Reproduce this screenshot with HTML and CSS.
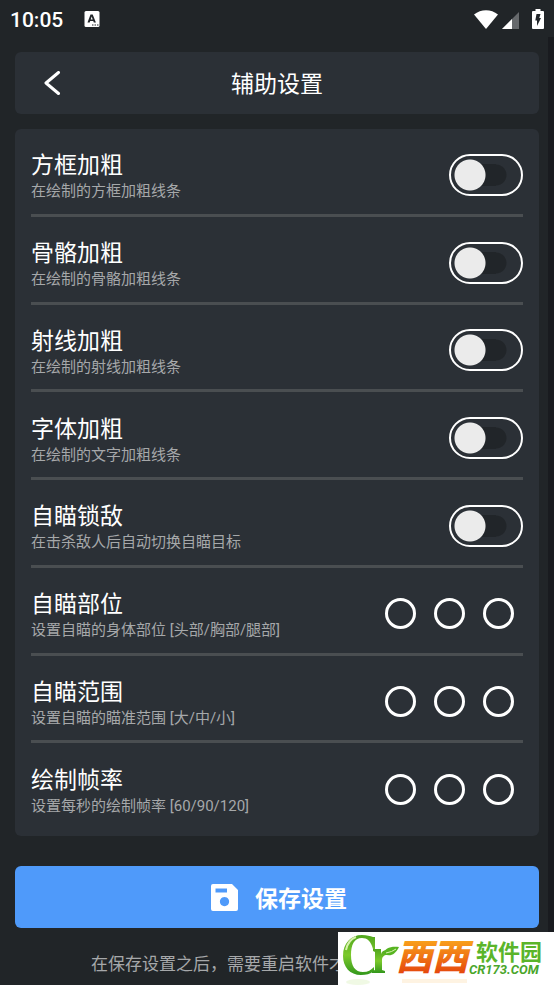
FILE: index.html
```html
<!DOCTYPE html>
<html lang="zh-CN">
<head>
<meta charset="utf-8">
<meta name="viewport" content="width=device-width, initial-scale=1">
<title>辅助设置</title>
<link rel="stylesheet" href="styles.css">
</head>
<body>
<div class="screen">
  <div class="status">
    <time class="clock">10:05</time>
    <svg class="ime" width="16" height="16" viewBox="0 0 16 16" aria-hidden="true"><rect x="0.5" y="0" width="15" height="16" rx="1.5" fill="#fff"/><path d="M3.500 11.500 6.500 3.500h2.200l3.200 8H9.800L9.300 10H6.200l-.5 1.500zM6.700 8.500h2L7.700 5.600z" fill="#212529" fill-rule="evenodd"/><path d="M8 14h1.500M10.500 14H12M13 14h1.500" stroke="#212529"/></svg>
    <div class="signals">
      <svg width="24" height="19" viewBox="0 0 24 19" aria-hidden="true"><path d="M0 4.500C7-1.300 17-1.300 24 4.500L12 19z" fill="#fff"/></svg>
      <svg class="cell" width="17" height="17" viewBox="0 0 17 17" aria-hidden="true"><path d="M17 0v17H0z" fill="#66696c"/><path d="M10 7v10H0z" fill="#fff"/></svg>
      <svg class="battery" width="12" height="20" viewBox="0 0 12 20" aria-hidden="true"><path d="M3.500 0h5v2H11q1 0 1 1v16q0 1-1 1H1q-1 0-1-1V3q0-1 1-1h2.500z" fill="#fff"/><path d="M4.500 5h4L7.300 9H9l-4 8v-5.500H3.300z" fill="#212529"/></svg>
    </div>
  </div>
  <header class="bar">
    <button class="back" type="button" aria-label="返回"><svg width="18" height="24" viewBox="0 0 18 24" aria-hidden="true"><path d="M15.500 1.500 3 12l12.500 10.500" fill="none" stroke="#fff" stroke-width="3" stroke-linecap="round" stroke-linejoin="round"/></svg></button>
    <h1 class="heading">辅助设置</h1>
  </header>
  <main class="card">
    <label class="row"><span class="text"><span class="title">方框加粗</span><span class="note">在绘制的方框加粗线条</span></span><input class="switch" type="checkbox"></label>
    <label class="row"><span class="text"><span class="title">骨骼加粗</span><span class="note">在绘制的骨骼加粗线条</span></span><input class="switch" type="checkbox"></label>
    <label class="row"><span class="text"><span class="title">射线加粗</span><span class="note">在绘制的射线加粗线条</span></span><input class="switch" type="checkbox"></label>
    <label class="row"><span class="text"><span class="title">字体加粗</span><span class="note">在绘制的文字加粗线条</span></span><input class="switch" type="checkbox"></label>
    <label class="row"><span class="text"><span class="title">自瞄锁敌</span><span class="note">在击杀敌人后自动切换自瞄目标</span></span><input class="switch" type="checkbox"></label>
    <div class="row" role="radiogroup" aria-labelledby="part"><span class="text"><span class="title" id="part">自瞄部位</span><span class="note">设置自瞄的身体部位 [头部/胸部/腿部]</span></span><span class="choices"><input type="radio" name="part" aria-label="头部"><input type="radio" name="part" aria-label="胸部"><input type="radio" name="part" aria-label="腿部"></span></div>
    <div class="row" role="radiogroup" aria-labelledby="range"><span class="text"><span class="title" id="range">自瞄范围</span><span class="note">设置自瞄的瞄准范围 [大/中/小]</span></span><span class="choices"><input type="radio" name="range" aria-label="大"><input type="radio" name="range" aria-label="中"><input type="radio" name="range" aria-label="小"></span></div>
    <div class="row" role="radiogroup" aria-labelledby="rate"><span class="text"><span class="title" id="rate">绘制帧率</span><span class="note">设置每秒的绘制帧率 [60/90/120]</span></span><span class="choices"><input type="radio" name="rate" aria-label="60"><input type="radio" name="rate" aria-label="90"><input type="radio" name="rate" aria-label="120"></span></div>
  </main>
  <button class="save" type="button"><svg width="27" height="27" viewBox="0 0 27 27" aria-hidden="true"><path fill="#fff" fill-rule="evenodd" d="M2 0h19l6 6v19q0 2-2 2H2q-2 0-2-2V2q0-2 2-2zM4.500 4.500v4H16v-4zM13.500 13a4.600 4.600 0 1 0 .01 0z"/></svg>保存设置</button>
  <p class="hint">在保存设置之后，需要重启软件才</p>
</div>
<svg class="brand" width="216" height="53" viewBox="0 0 216 53" role="img" aria-label="西西软件园">
  <defs>
    <linearGradient id="green" x1="0" y1="0" x2="0" y2="1"><stop offset="0" stop-color="#4fa51e"/><stop offset="0.500" stop-color="#7cc92c"/><stop offset="1" stop-color="#32971b"/></linearGradient>
    <linearGradient id="orange" x1="0" y1="0" x2="0" y2="1"><stop offset="0.200" stop-color="#faa61c"/><stop offset="0.900" stop-color="#e4430c"/></linearGradient>
  </defs>
  <rect width="216" height="53" fill="#fff"/>
  <path d="M37 5v12h-2C33 9 29 6 24 6c-8 0-11 7-11 17 0 11 4 17 12 17 5 0 8-2 11-5v4c-4 3-8 4-13 4C12 43 5 35 5 24 5 11 13 3 24 3c5 0 8 1 11 2z" fill="url(#green)"/>
  <path d="M35 17h8v5c1-3 3-4 6-4v5c-3 0-5 2-5 5v10l3 1v2H34v-2l3-1V20l-2-1z" fill="url(#green)"/>
  <path d="M46 22c0-6 7-8 15-7-4 8-9 10-15 7z" fill="#57b421"/><path d="M48 21q6-1 10-4" fill="none" stroke="#d8f2ae"/>
  <path d="M8 18Q10 8 18 5" fill="none" stroke="#d8f2ae" stroke-width="2"/>
  <text class="mark" x="58" y="38" fill="url(#orange)">西西</text>
  <text class="name" x="138" y="28" fill="#5ab52a">软件园</text>
  <text class="site" x="131" y="42" fill="#4aa62b">CR173.COM</text>
  <g opacity="0.120"><ellipse cx="20" cy="50" rx="12" ry="3" fill="#8bd02a"/><path d="M64 47h65v4H64z" fill="#faa61c"/></g>
</svg>
</body>
</html>
```
FILE: styles.css
```css
* { box-sizing: border-box; }

body {
  margin: 0;
  background: #212529;
  color: #fff;
  font-family: Roboto, "Noto Sans CJK SC", sans-serif;
}

.screen {
  display: flex;
  flex-direction: column;
  min-height: 100vh;
  padding: 0 15px;
  background: linear-gradient(#191b1f, #191b1f) right 0 top 37px / 6px 100% no-repeat #212528;
}

.status {
  display: flex;
  align-items: center;
  height: 37px;
  margin: 0 -5px 15px;
}

.clock {
  font-size: 21px;
  line-height: 36px;
  font-weight: 500;
  padding-top: 2px;
}

.ime { margin-left: 21px; }

.signals {
  display: flex;
  align-items: flex-end;
  height: 20px;
  margin-left: auto;
}

.cell { margin-left: 4px; }
.battery { margin-left: 13px; }

.bar {
  display: grid;
  grid-template-columns: 74px 1fr 74px;
  align-items: center;
  height: 62px;
  margin-bottom: 15px;
  border-radius: 6px;
  background: #2b3036;
}

.back {
  display: flex;
  justify-content: center;
  padding: 0;
  border: 0;
  background: none;
}

.heading {
  margin: 0;
  padding-top: 3px;
  font-size: 23px;
  line-height: 32px;
  font-weight: 400;
  text-align: center;
}

.card {
  display: flex;
  flex: 1;
  flex-direction: column;
  padding: 0 16px 5px;
  border-radius: 6px;
  background: #2b3036;
}

.row {
  display: flex;
  flex: 1;
  align-items: center;
  justify-content: space-between;
  padding-top: 7px;
  border-bottom: 3px solid #4a4e51;
}

.row:last-child { border-color: transparent; }

.text {
  display: flex;
  flex-direction: column;
  padding-top: 3px;
}

.title {
  font-size: 23px;
  line-height: 30px;
}

.note {
  color: #a6a8aa;
  font-size: 15px;
  line-height: 20px;
}

.switch {
  appearance: none;
  width: 74px;
  height: 42px;
  margin: 0;
  border: 2px solid #fff;
  border-radius: 21px;
  background:
    radial-gradient(circle at 19px 19px, #ebebeb 15px, transparent 16px),
    radial-gradient(circle at 45px 19px, #212529 10px, transparent 11px),
    linear-gradient(#212529, #212529) 20px 8px / 25px 22px no-repeat;
}

.switch:checked {
  background:
    radial-gradient(circle at 50px 19px, #ebebeb 15px, transparent 16px),
    #4f9afa;
}

.choices {
  display: flex;
  gap: 18px;
  padding-right: 9px;
}

.choices input {
  appearance: none;
  width: 31px;
  height: 31px;
  margin: 0;
  border: 3px solid #fff;
  border-radius: 50%;
}

.choices input:checked { background: #4f9afa; }

.save {
  display: flex;
  align-items: center;
  justify-content: center;
  gap: 17px;
  height: 62px;
  margin: 30px 0 22px;
  padding: 0 0 0 4px;
  border: 0;
  border-radius: 6px;
  background: #4f9afa;
  color: #fff;
  font-family: inherit;
  font-size: 23px;
  font-weight: 700;
}

.hint {
  margin: 0 0 7px;
  padding: 1px 0 0 76px;
  color: #a6a8aa;
  font-size: 17px;
  line-height: 27px;
  white-space: nowrap;
}

.brand {
  position: fixed;
  right: 0;
  bottom: 0;
}

.mark {
  font: italic 900 36px "Noto Sans CJK SC", sans-serif;
}

.name {
  font: 700 22px "Noto Sans CJK SC", sans-serif;
}

.site {
  font: italic 700 13px Roboto, sans-serif;
}
```
